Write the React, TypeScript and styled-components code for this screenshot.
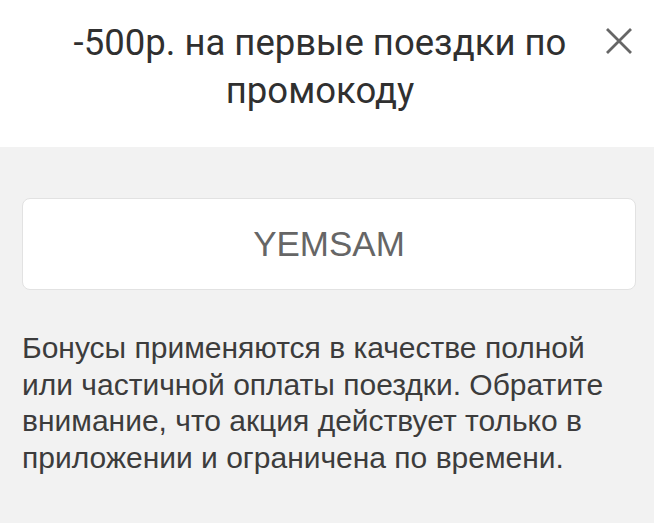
import React from 'react';
import styled, { createGlobalStyle } from 'styled-components';

const GlobalStyle = createGlobalStyle`
  html, body {
    margin: 0;
    padding: 0;
    background: #f2f2f2;
  }
  body {
    font-family: Roboto, 'Noto Sans', sans-serif;
  }
`;

const Page = styled.div`
  width: 654px;
  min-height: 523px;
  display: flex;
  flex-direction: column;
  background: #f2f2f2;
`;

const Header = styled.div`
  display: flex;
  align-items: flex-start;
  gap: 15px;
  background: #ffffff;
  padding: 19px 21px 0 50px;
  height: 147px;
  box-sizing: border-box;
`;

const Title = styled.h1`
  flex: 1;
  margin: 0;
  text-align: center;
  font-family: Roboto, sans-serif;
  font-weight: 400;
  font-size: 36.5px;
  line-height: 48px;
  color: #303030;
`;

const CloseButton = styled.button`
  flex: none;
  width: 28px;
  height: 28px;
  margin-top: 8px;
  padding: 0;
  border: none;
  background: transparent;
  display: flex;
  align-items: center;
  justify-content: center;
  cursor: pointer;
`;

const Body = styled.div`
  display: flex;
  flex-direction: column;
  padding: 51px 18px 0 22px;
`;

const CodeBox = styled.div`
  height: 92px;
  box-sizing: border-box;
  display: flex;
  align-items: center;
  justify-content: center;
  background: #ffffff;
  border: 1.5px solid #e2e2e2;
  border-radius: 8px;
  font-family: 'Liberation Sans', Arial, sans-serif;
  font-size: 35px;
  color: #666666;
`;

const Note = styled.p`
  margin: 40px 16px 0 0;
  font-family: 'Liberation Sans', Arial, sans-serif;
  font-size: 30px;
  line-height: 36.5px;
  color: #3c3c3c;
`;

export default function App() {
  return (
    <>
      <GlobalStyle />
      <Page>
        <Header>
          <Title>-500р. на первые поездки по промокоду</Title>
          <CloseButton aria-label="Закрыть">
            <svg width="28" height="28" viewBox="0 0 28 28">
              <path d="M2 2 L26 26 M26 2 L2 26" stroke="#666666" strokeWidth="2.8" />
            </svg>
          </CloseButton>
        </Header>
        <Body>
          <CodeBox>YEMSAM</CodeBox>
          <Note>
            Бонусы применяются в качестве полной или частичной оплаты поездки. Обратите
            внимание, что акция действует только в приложении и ограничена по времени.
          </Note>
        </Body>
      </Page>
    </>
  );
}
